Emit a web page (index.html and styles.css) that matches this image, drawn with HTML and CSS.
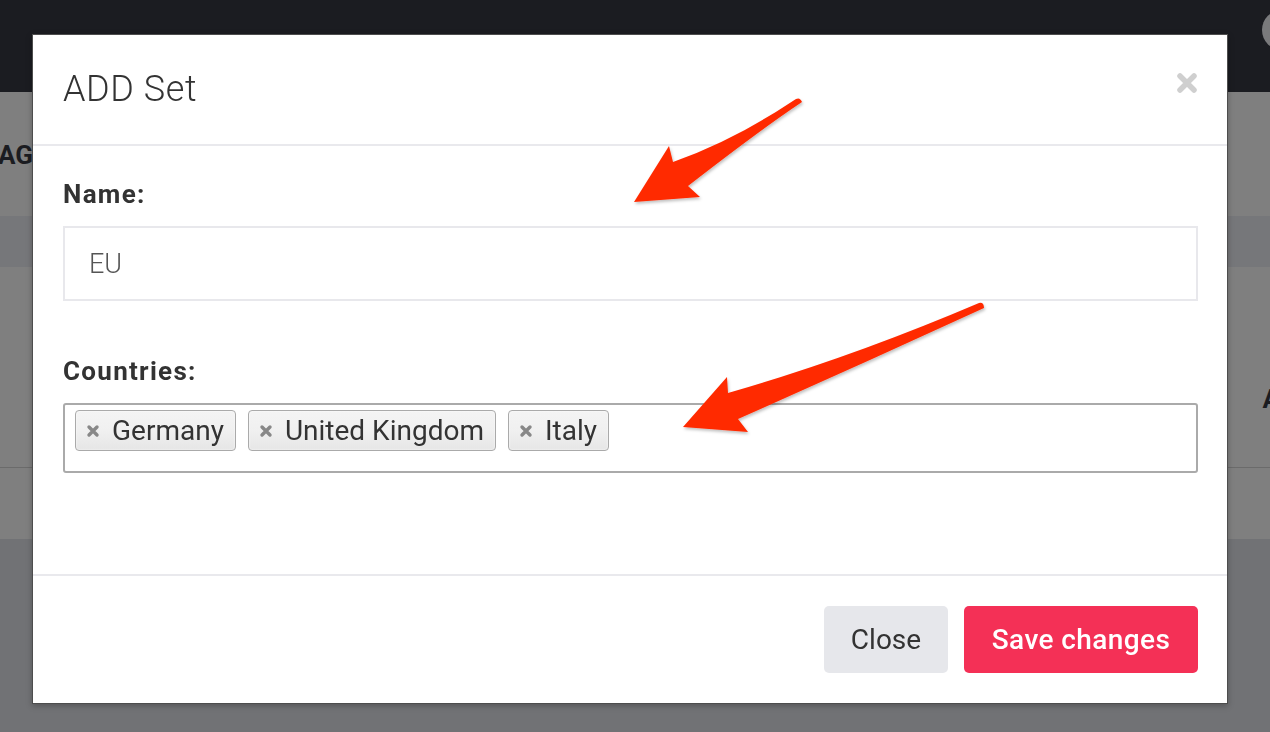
FILE: index.html
```html
<!DOCTYPE html>
<html>
<head>
<meta charset="utf-8">
<link rel="stylesheet" href="styles.css">
</head>
<body>
<div class="page">
  <div class="navbar"><span class="avatar"></span></div>
  <div class="band band-a"><span class="page-title">AG</span></div>
  <div class="band band-b"></div>
  <div class="band band-c"><span class="page-letter">A</span></div>
  <div class="band band-d"></div>
  <div class="band band-e"></div>
</div>

<div class="modal">
  <div class="modal-header">
    <h4 class="modal-title">ADD Set</h4>
    <span class="close-x">
      <svg width="22" height="22" viewBox="0 0 22 22"><path d="M4 4 L18 18 M18 4 L4 18" stroke="#cfcfcf" stroke-width="5.5" stroke-linecap="round"/></svg>
    </span>
  </div>
  <div class="modal-body">
    <label class="field-label">Name:</label>
    <div class="text-input">EU</div>
    <label class="field-label second">Countries:</label>
    <div class="tag-select">
      <span class="tag"><svg class="tag-x" width="14" height="14" viewBox="0 0 14 14"><path d="M3 3 L11 11 M11 3 L3 11" stroke="#888" stroke-width="3.4" stroke-linecap="round"/></svg>Germany</span>
      <span class="tag"><svg class="tag-x" width="14" height="14" viewBox="0 0 14 14"><path d="M3 3 L11 11 M11 3 L3 11" stroke="#888" stroke-width="3.4" stroke-linecap="round"/></svg>United Kingdom</span>
      <span class="tag"><svg class="tag-x" width="14" height="14" viewBox="0 0 14 14"><path d="M3 3 L11 11 M11 3 L3 11" stroke="#888" stroke-width="3.4" stroke-linecap="round"/></svg>Italy</span>
    </div>
  </div>
  <div class="modal-footer">
    <button class="btn btn-close">Close</button>
    <button class="btn btn-save">Save changes</button>
  </div>
</div>

<svg class="arrows" width="1270" height="732" viewBox="0 0 1270 732">
  <defs>
    <filter id="sh" x="-10%" y="-10%" width="130%" height="130%">
      <feDropShadow dx="1" dy="2" stdDeviation="1.5" flood-color="#000" flood-opacity="0.25"/>
    </filter>
  </defs>
  <path filter="url(#sh)" fill="#ff2a00" d="M796 99 Q800 97 802 102 Q760 130 688 186 L700 197 L634 202 L669 146 L673 162 Q735 140 796 99 Z"/>
  <path filter="url(#sh)" fill="#ff2a00" d="M979 303 Q984 302 984 308 Q860 365 738 419 L748 432 L683 427 L727 377 L728 393 Q850 358 979 303 Z"/>
</svg>
</body>
</html>
```

FILE: styles.css
```css
* { box-sizing: border-box; }
html, body { margin: 0; padding: 0; }
body {
  width: 1270px;
  height: 732px;
  overflow: hidden;
  font-family: Roboto, "Liberation Sans", sans-serif;
  background: #717275;
}
.page { display: flex; flex-direction: column; }
.navbar {
  height: 92px;
  background: #1b1c21;
  display: flex;
  justify-content: flex-end;
  align-items: center;
}
.avatar {
  width: 40px; height: 40px; border-radius: 50%;
  background: #7a7a7c;
  margin-right: -32px;
  margin-top: -32px;
}
.band { background: #7f7f7f; display: flex; align-items: center; }
.band-a { height: 124px; }
.band-b { height: 51px; background: #76777a; }
.band-c { height: 201px; border-bottom: 1px solid #6b6b6b; justify-content: flex-end; }
.band-d { height: 71px; }
.band-e { height: 193px; background: #717275; }
.page-title { font-weight: 700; font-size: 26px; color: #1b1c21; margin-left: -2px; margin-top: 2px; }
.page-letter { font-weight: 700; font-size: 26px; color: #1b1c21; margin-right: -10px; margin-top: 64px; }

.modal {
  position: fixed;
  left: 32px; top: 34px;
  width: 1196px; height: 670px;
  background: #fff;
  border: 1px solid #4d4d4d;
  box-shadow: 0 2px 6px rgba(0,0,0,0.25);
  display: flex;
  flex-direction: column;
  color: #333;
}
.modal-header {
  height: 111px;
  flex: none;
  border-bottom: 2px solid #e9e9ed;
  display: flex;
  align-items: center;
  justify-content: space-between;
  padding: 0 30px 2px 30px;
}
.modal-title {
  margin: 0;
  font-size: 36px;
  font-weight: 300;
  letter-spacing: 0.6px;
  color: #333;
}
.close-x { display: flex; margin-top: -12px; margin-right: -1px; }
.modal-body {
  height: 428px;
  flex: none;
  padding: 31px 29px 0 30px;
  display: flex;
  flex-direction: column;
}
.field-label {
  font-weight: 700;
  font-size: 26px;
  line-height: 34px;
  letter-spacing: 1.3px;
  color: #333;
  margin-bottom: 15px;
}
.field-label.second { margin-top: 53px; }
.text-input {
  height: 75px;
  border: 2px solid #e8e8ec;
  padding: 0 24px;
  display: flex;
  align-items: center;
  font-size: 27px;
  font-weight: 300;
  color: #555;
}
.tag-select {
  height: 70px;
  border: 2px solid #aaa;
  border-radius: 3px;
  padding: 5px 10px;
  display: flex;
  align-items: flex-start;
  gap: 12px;
}
.tag {
  height: 41px;
  border: 1px solid #aaa;
  border-radius: 4px;
  background: linear-gradient(#f4f4f4 0%, #f0f0f0 50%, #e6e6e6 100%);
  box-shadow: inset 0 0 2px #fff;
  display: flex;
  align-items: center;
  padding: 0 11px 0 10px;
  font-size: 28px;
  color: #333;
  line-height: 1;
}
.tag-x {
  flex: none;
  margin-right: 12px;
  margin-top: 1px;
}
.modal-footer {
  flex: 1;
  border-top: 2px solid #e9e9ed;
  display: flex;
  justify-content: flex-end;
  align-items: center;
  gap: 16px;
  padding: 0 29px 0 0;
}
.btn {
  height: 67px;
  border: none;
  border-radius: 5px;
  font-family: Roboto, "Liberation Sans", sans-serif;
  font-size: 28px;
  padding: 0;
}
.btn-close { width: 124px; background: #e6e7eb; color: #333; }
.btn-save { width: 234px; background: #f43056; color: #fff; font-weight: 500; letter-spacing: 0.4px; }

.arrows {
  position: fixed;
  left: 0; top: 0;
  pointer-events: none;
}
```
